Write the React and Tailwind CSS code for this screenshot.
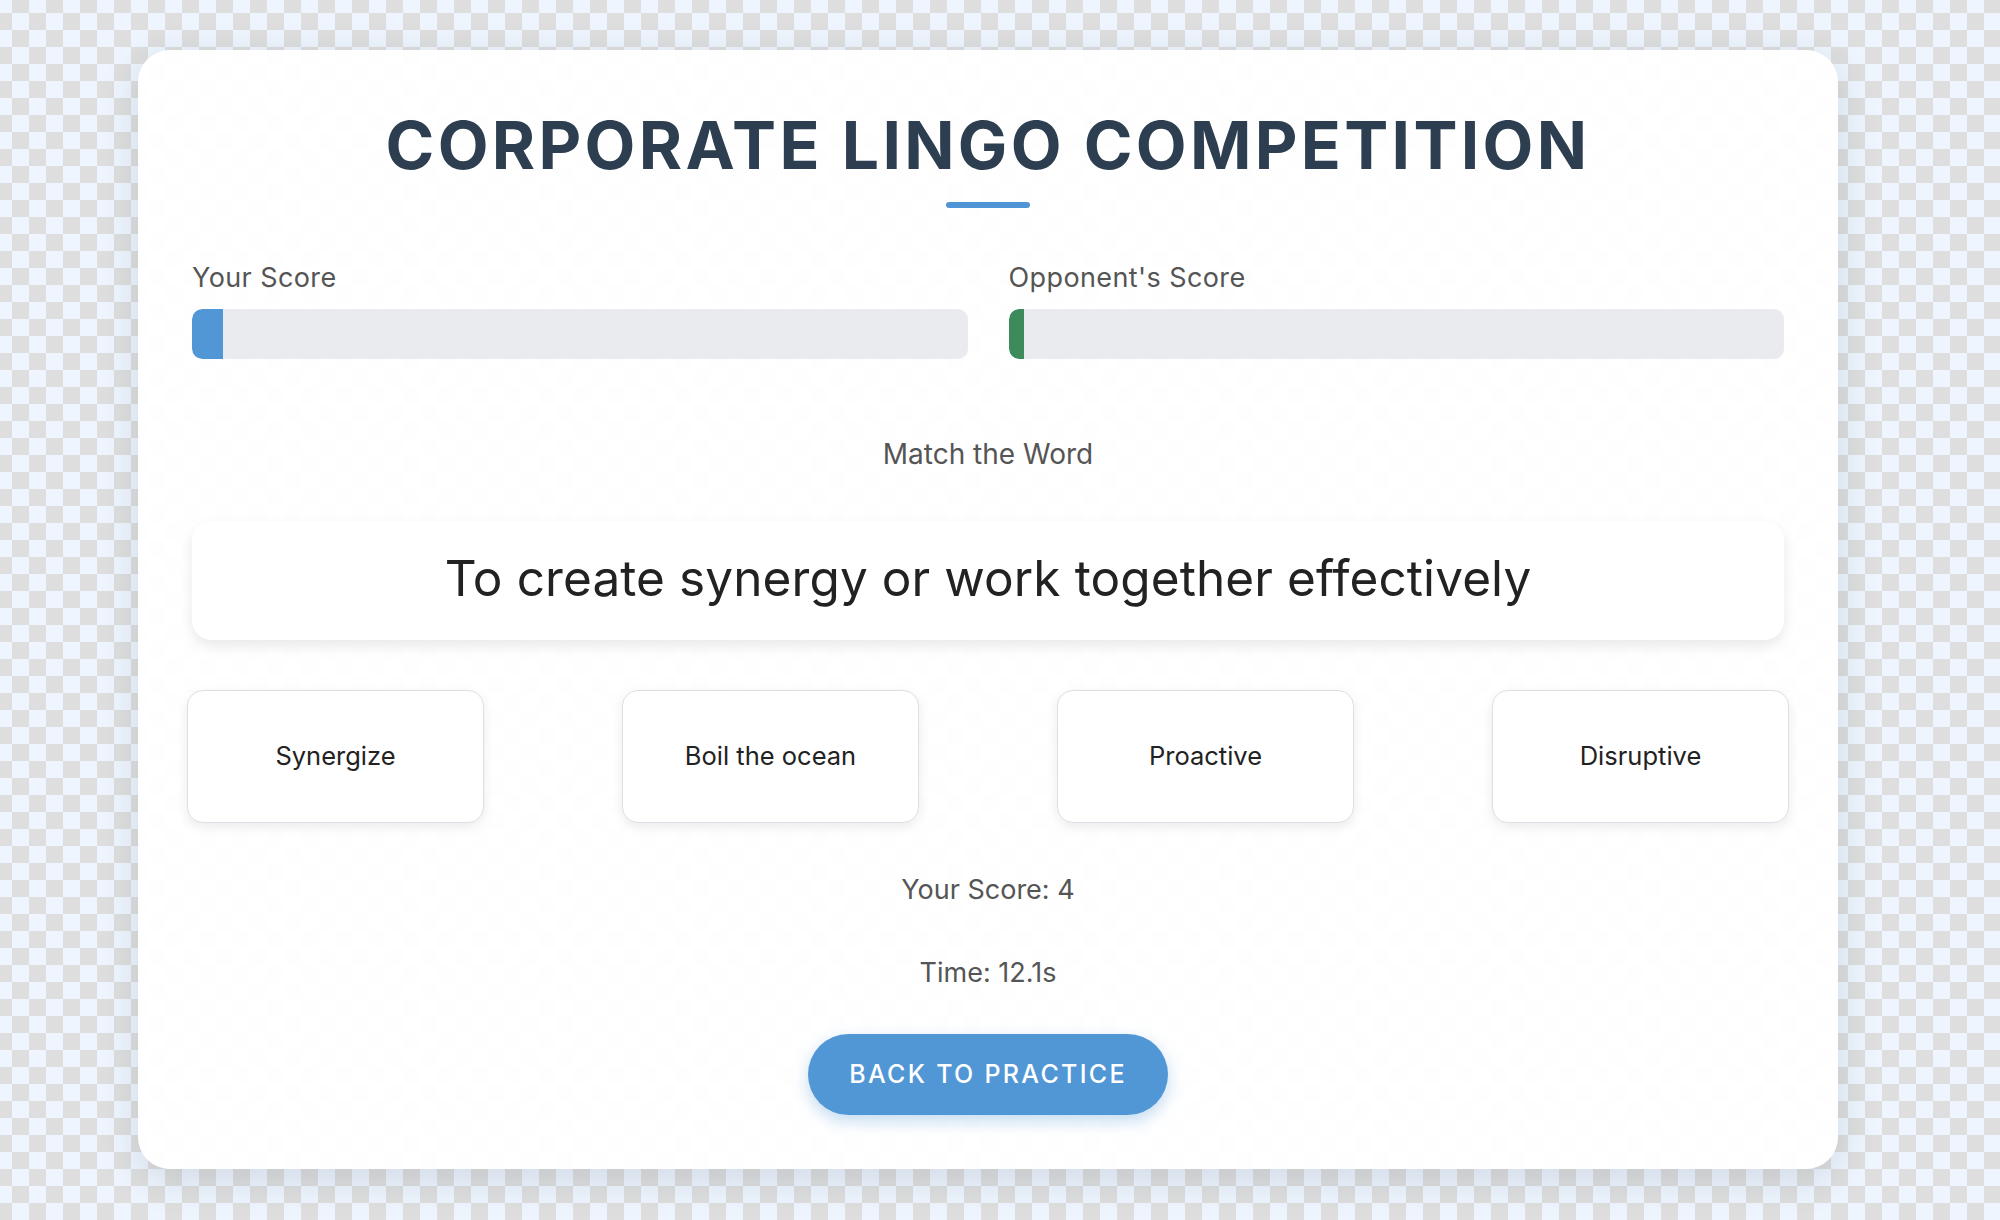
import React from 'react';

const OPTIONS = ['Synergize', 'Boil the ocean', 'Proactive', 'Disruptive'];

const ScoreBar = ({ label, pct, fill }) => (
  <div className="flex flex-col">
    <span className="text-[27px] leading-none tracking-[0.4px] text-[#555555] mb-[18px]">{label}</span>
    <div className="h-[50px] rounded-[10px] bg-[#e9ebee] overflow-hidden">
      <div className={`h-full rounded-l-[10px] ${fill}`} style={{ width: `${pct}%` }} />
    </div>
  </div>
);

const App = () => {
  return (
    <div
      className="min-h-screen w-full pt-[50px] pl-[138px] pb-[51px] bg-[conic-gradient(#dedede_25%,#eef5fe_0_50%,#dedede_0_75%,#eef5fe_0)] bg-[length:34px_34px] bg-[position:-5px_-4px]"
      style={{ fontFamily: 'Inter, "Noto Sans", sans-serif' }}
    >
      <div className="w-[1700px] rounded-[32px] bg-white/95 shadow-[0_10px_40px_rgba(30,50,80,0.14)] px-[54px] pt-[62px] pb-[54px] flex flex-col items-center">
        {/* Title */}
        <h1 className="text-[66px] leading-none font-bold tracking-[3.3px] text-[#2c3e50]">
          CORPORATE LINGO COMPETITION
        </h1>
        <div className="mt-[24px] h-[6px] w-[84px] rounded-full bg-[#4f95d6]" />

        {/* Score bars */}
        <div className="mt-[56px] w-full grid grid-cols-2 gap-[41px]">
          <ScoreBar label="Your Score" pct={4} fill="bg-[#5197d6]" />
          <ScoreBar label="Opponent's Score" pct={2} fill="bg-[#3d8a5a]" />
        </div>

        <p className="mt-[81px] text-[28px] leading-none text-[#555555]">Match the Word</p>

        {/* Definition */}
        <div className="mt-[53px] w-full h-[119px] rounded-[20px] bg-white/80 shadow-[0_6px_14px_rgba(0,0,0,0.09)] flex items-center justify-center">
          <span className="text-[49.5px] leading-none tracking-[0.1px] text-[#222222] -mt-[4px]">
            To create synergy or work together effectively
          </span>
        </div>

        {/* Options */}
        <div className="mt-[50px] w-[1602px] grid grid-cols-4 gap-[138px]">
          {OPTIONS.map((o) => (
            <button
              key={o}
              className="h-[133px] rounded-[16px] bg-white border border-[#dce0e6] shadow-[0_4px_12px_rgba(0,0,0,0.08)] text-[25.5px] text-[#222222]"
            >
              {o}
            </button>
          ))}
        </div>

        <p className="mt-[53px] text-[27px] leading-none text-[#555555]">Your Score: 4</p>
        <p className="mt-[56px] text-[27px] leading-none text-[#555555]">Time: 12.1s</p>

        <button className="mt-[48px] w-[360px] h-[81px] rounded-full bg-[#5197d6] text-white text-[25px] font-medium tracking-[2.3px] shadow-[0_6px_16px_rgba(81,151,214,0.35)]">
          BACK TO PRACTICE
        </button>
      </div>
    </div>
  );
};

export default App;
